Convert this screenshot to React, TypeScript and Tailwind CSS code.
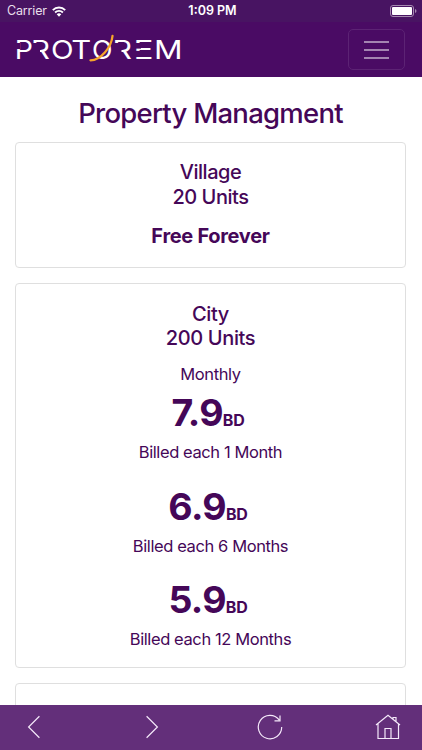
import React from 'react';

interface Price {
  id: string;
  label?: string;
  amount: string;
  billing: string;
}

const prices: Price[] = [
  { id: 'monthly', label: 'Monthly', amount: '7.9', billing: 'Billed each 1 Month' },
  { id: 'half-year', amount: '6.9', billing: 'Billed each 6 Months' },
  { id: 'yearly', amount: '5.9', billing: 'Billed each 12 Months' },
];

const logoLetters = [
  { char: 'P', x: -0.3, width: 18.2 },
  { char: 'R', x: 16, width: 18.9 },
  { char: 'O', x: 36, width: 22.6 },
  { char: 'T', x: 56.3, width: 20 },
  { char: 'O', x: 77, width: 20.5 },
  { char: 'R', x: 97.5, width: 19.5 },
  { char: 'E', x: 118.6, width: 20 },
  { char: 'M', x: 139, width: 28.6 },
];

function StatusBar() {
  return (
    <div className="grid h-[22px] grid-cols-3 items-center bg-[#481462] text-[12.5px] leading-[22px] text-white">
      <div className="flex items-center gap-[5px] pl-[7px] text-[#e8dfeb]">
        <span className="tracking-[-0.15px]">Carrier</span>
        <svg width="14" height="11" viewBox="0 0 14 11" fill="none" stroke="white" strokeWidth="1.9">
          <path d="M.8 4.1a8.8 8.8 0 0 1 12.4 0M3.1 6.5a5.6 5.6 0 0 1 7.8 0" />
          <path d="m4.7 8.2 2.3 2.5 2.3-2.5a3.5 3.5 0 0 0-4.6 0Z" fill="white" stroke="none" />
        </svg>
      </div>
      <span className="pl-[3px] text-center font-semibold">1:09 PM</span>
      <svg className="mr-[5px] justify-self-end" width="27" height="12" viewBox="0 0 27 12">
        <rect x=".5" y=".5" width="23" height="11" rx="2.5" fill="none" stroke="#a58ab0" />
        <rect x="2" y="2" width="20" height="8" rx="1" fill="white" />
        <path d="M25 4v4c2-.7 2-3.3 0-4Z" fill="#a58ab0" />
      </svg>
    </div>
  );
}

function Logo() {
  return (
    <svg width="168" height="32" viewBox="0 0 168 32" aria-label="Protorem">
      <g fill="white" fontFamily="Inter, sans-serif" fontSize="25.6" fontWeight="400">
        {logoLetters.map((letter) => (
          <text key={letter.x} x={letter.x} y="25.3" textLength={letter.width} lengthAdjust="spacingAndGlyphs">
            {letter.char}
          </text>
        ))}
      </g>
      {/* gaps in the stems */}
      <g fill="#4a0b64">
        <rect x="0" y="9" width="5.2" height="6" />
        <rect x="17" y="9" width="8" height="17" />
        <rect x="98" y="9" width="8.5" height="17" />
        <rect x="120" y="9" width="6" height="5.6" />
        <rect x="120" y="16.9" width="6" height="6.1" />
      </g>
      <path d="M75.5 26.3C86 26 96.5 13 97.5 2" fill="none" stroke="#f5a52b" strokeWidth="2.3" strokeLinecap="round" />
    </svg>
  );
}

function Header() {
  return (
    <header className="flex h-[55px] items-center justify-between bg-[#4a0b64] pr-[17px] pl-[15px]">
      <Logo />
      <button className="flex h-[41px] w-[57px] flex-col items-center justify-center gap-[6px] rounded-[5px] border border-[#5c2374]">
        <span className="h-[2px] w-[25px] bg-[#a484b1]" />
        <span className="h-[2px] w-[25px] bg-[#a484b1]" />
        <span className="h-[2px] w-[25px] bg-[#a484b1]" />
      </button>
    </header>
  );
}

function PriceBlock({ price }: { price: Price }) {
  return (
    <div className="mb-[22.7px]">
      {price.label && <p className="mb-[5px] text-[16.5px] leading-[25px] tracking-[-0.4px]">{price.label}</p>}
      <p className="pr-[5px] text-[37.5px] leading-[41px] font-bold tracking-[-0.7px]">
        {price.amount}
        <span className="text-[16px] leading-none tracking-[-0.2px]">BD</span>
      </p>
      <p className="mt-[9px] text-[16.5px] leading-[21px] tracking-[-0.4px]">{price.billing}</p>
    </div>
  );
}

function Toolbar() {
  return (
    <nav className="flex h-[45px] shrink-0 items-center justify-between bg-[#632f7a] px-[20.5px] pb-[1px]">
      <svg width="26" height="26" viewBox="0 0 26 26" fill="none" stroke="#f5e9fa" strokeWidth="1.2">
        <path d="M18.4 2.3 7.6 13 18.4 23.7" />
      </svg>
      <svg width="26" height="26" viewBox="0 0 26 26" fill="none" stroke="#f5e9fa" strokeWidth="1.2">
        <path d="M7.6 2.3 18.4 13 7.6 23.7" />
      </svg>
      <svg width="26" height="26" viewBox="0 0 26 26" fill="none" stroke="#f5e9fa" strokeWidth="1.2">
        <path d="M24.7 13A11.7 11.7 0 1 1 22.2 5.8M23 1.5V6.8H17.5" />
      </svg>
      <svg width="26" height="26" viewBox="0 0 26 26" fill="none" stroke="#f5e9fa" strokeWidth="1.2">
        <path d="M1 11 13 1.2 25 11M3 9.5V24.5H23.5V9.5M10 24.5V14.5H16V24.5M18 5V3.5H21V7.7" />
      </svg>
    </nav>
  );
}

export default function App() {
  return (
    <div className="flex h-[750px] w-[422px] flex-col overflow-hidden bg-white font-['Inter',sans-serif] text-[#450758]">
      <StatusBar />
      <Header />
      <main className="min-h-0 flex-1 overflow-hidden pr-4 pl-[15px] pt-[19px] text-center">
        <h1 className="mb-[12px] text-[27.5px] leading-[34px] font-medium tracking-[-0.75px]">Property Managment</h1>

        <section className="mb-[15px] h-[126px] rounded-[4px] border border-[#dfdfdf] pt-[17px]">
          <h2 className="text-[20px] leading-[24.5px] font-medium tracking-[-0.45px]">
            Village
            <br />
            20 Units
          </h2>
          <p className="mt-[15px] text-[20px] leading-[25px] font-bold tracking-[-0.3px]">Free Forever</p>
        </section>

        <section className="mb-[15px] h-[385px] rounded-[4px] border border-[#dfdfdf] pt-[17.5px]">
          <h2 className="mb-[11.5px] text-[20px] leading-[24.5px] font-medium tracking-[-0.35px]">
            City
            <br />
            200 Units
          </h2>
          {prices.map((price) => (
            <PriceBlock key={price.id} price={price} />
          ))}
        </section>

        <section className="h-[300px] rounded-[4px] border border-[#dfdfdf]" />
      </main>
      <Toolbar />
    </div>
  );
}
